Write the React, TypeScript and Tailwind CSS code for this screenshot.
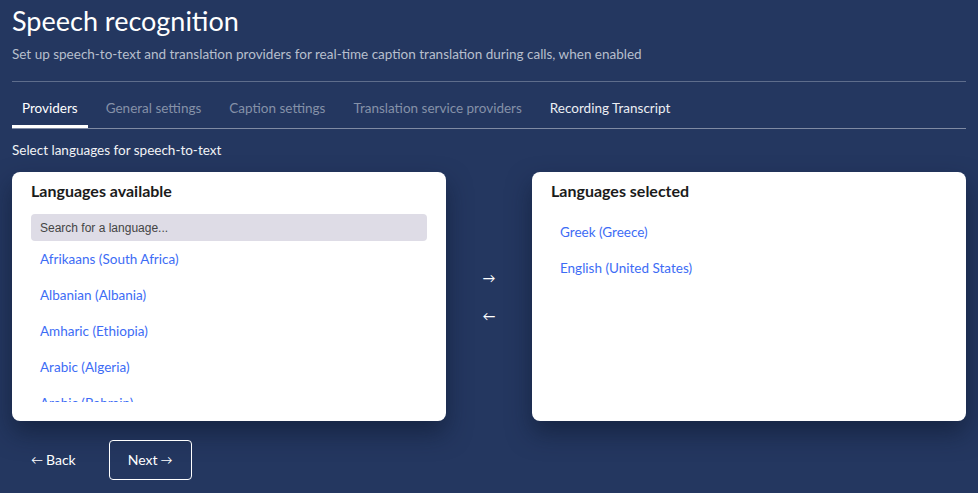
import React, { useState } from "react";

const tabs = [
    { label: "Providers", state: "active" },
    { label: "General settings", state: "muted" },
    { label: "Caption settings", state: "muted" },
    { label: "Translation service providers", state: "muted" },
    { label: "Recording Transcript", state: "normal" },
];

const available = [
    "Afrikaans (South Africa)",
    "Albanian (Albania)",
    "Amharic (Ethiopia)",
    "Arabic (Algeria)",
    "Arabic (Bahrain)",
    "Arabic (Egypt)",
];

const selected = ["Greek (Greece)", "English (United States)"];

function LangItem({ label }: { label: string }) {
    return (
        <div className="h-[36px] shrink-0 px-[9px] py-2 text-[13.5px] leading-[20px] text-[#3d6cf5] cursor-pointer">
            {label}
        </div>
    );
}

export default function App() {
    const [query, setQuery] = useState("");

    return (
        <div className="min-h-screen bg-[#243760] px-3 pt-[5px] font-['Lato',sans-serif] text-white">
            <h1 className="text-[27px] leading-[32px] font-normal">Speech recognition</h1>
            <p className="mt-[7px] text-[13.5px] leading-[20px] text-[#b7bfcd]">
                Set up speech-to-text and translation providers for real-time caption translation during calls, when enabled
            </p>

            <div className="mt-[17px] border-t border-[#5e6d8c]">
                <div className="flex gap-[8px] border-b border-[#7f8aa3]">
                    {tabs.map((t) => (
                        <button
                            key={t.label}
                            className={[
                                "px-[10px] pt-[16px] pb-[7px] border-b-[3px] text-[13.5px] leading-[20px]",
                                t.state === "active" ? "border-white text-white" : "border-transparent",
                                t.state === "muted" ? "text-[#8591a8]" : "",
                                t.state === "normal" ? "text-[#eceef3]" : "",
                            ].join(" ")}
                        >
                            {t.label}
                        </button>
                    ))}
                </div>
            </div>

            <div className="mt-[11px] text-[13.5px] leading-[20px] text-[#f2f3f6]">Select languages for speech-to-text</div>

            <div className="mt-[12px] flex items-center justify-between">
                <div className="flex h-[249px] w-[434px] flex-col rounded-[8px] bg-white px-[19px] pt-[7px] pb-[19px] shadow-[0_12px_24px_rgba(10,20,40,0.5)]">
                    <div className="text-[16px] leading-[24px] font-bold text-[#1b1b1b]">Languages available</div>
                    <input
                        value={query}
                        onChange={(e) => setQuery(e.target.value)}
                        placeholder="Search for a language..."
                        className="mt-[11px] h-[27px] w-full shrink-0 rounded-[4px] bg-[#dedce6] px-[9px] font-['Liberation_Sans',Arial,sans-serif] text-[12px] text-[#333] placeholder:text-[#444] outline-none"
                    />
                    <div className="flex flex-1 flex-col overflow-hidden">
                        {available
                            .filter((l) => l.toLowerCase().includes(query.toLowerCase()))
                            .map((l) => (
                                <LangItem key={l} label={l} />
                            ))}
                    </div>
                </div>

                <div className="flex flex-col items-center gap-[24px] text-[13px] leading-[14px] text-white">
                    <button>→</button>
                    <button>←</button>
                </div>

                <div className="flex h-[249px] w-[434px] flex-col rounded-[8px] bg-white px-[19px] pt-[7px] pb-[19px] shadow-[0_12px_24px_rgba(10,20,40,0.5)]">
                    <div className="text-[16px] leading-[24px] font-bold text-[#1b1b1b]">Languages selected</div>
                    <div className="mt-[11px] flex flex-col">
                        {selected.map((l) => (
                            <LangItem key={l} label={l} />
                        ))}
                    </div>
                </div>
            </div>

            <div className="mt-[19px] flex gap-[14px] pb-[13px] text-[14px] leading-[20px]">
                <button className="flex h-[40px] items-center gap-[3px] rounded-[4px] border-[1.5px] border-transparent px-[18px] text-white">
                    <span className="text-[12px]">←</span>
                    <span>Back</span>
                </button>
                <button className="flex h-[40px] items-center gap-[3px] rounded-[4px] border-[1.5px] border-white px-[18px] text-white">
                    <span>Next</span>
                    <span className="text-[12px]">→</span>
                </button>
            </div>
        </div>
    );
}
